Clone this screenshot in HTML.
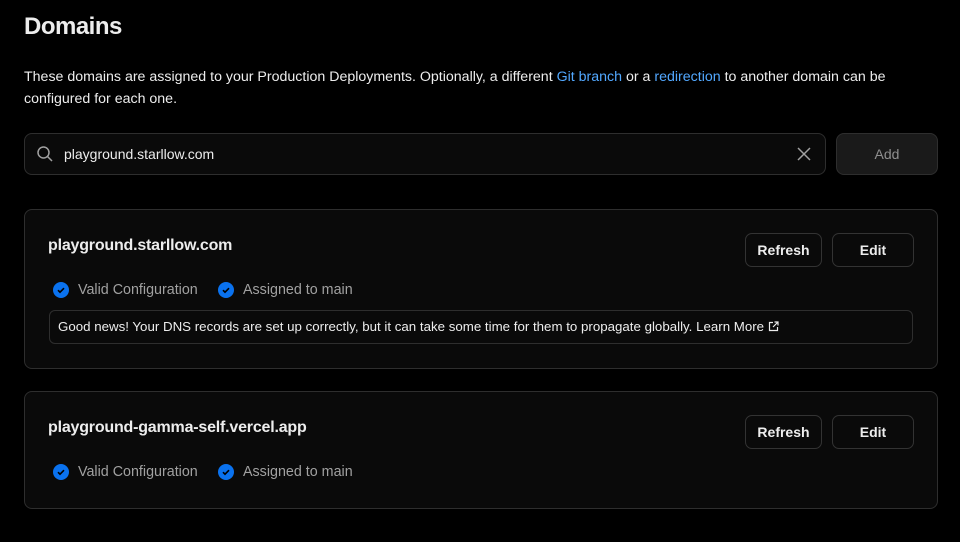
<!DOCTYPE html>
<html><head><style>
*{box-sizing:border-box;margin:0;padding:0}
body{width:960px;height:542px;background:#000;color:#ededed;font-family:"Liberation Sans",sans-serif;position:relative;overflow:hidden}
.abs{position:absolute}
h1{position:absolute;left:24px;top:13px;font-size:24px;font-weight:bold;letter-spacing:-0.5px;color:#ededed}
.desc{left:24px;top:66px;font-size:14.2px;line-height:22px;color:#ededed;width:880px}
.desc a{color:#52a8ff;text-decoration:none}
.search{left:24px;top:133px;width:802px;height:42px;border:1px solid #2e2e2e;border-radius:8px;background:#0a0a0a}
.add{left:836px;top:133px;width:102px;height:42px;border:1px solid #2e2e2e;border-radius:8px;background:#1a1a1a;color:#8f8f8f;font-size:14px;text-align:center;line-height:40px}
.card{left:24px;width:914px;border:1px solid #2e2e2e;border-radius:8px;background:#0a0a0a}
.name{font-size:16px;font-weight:bold;color:#ededed;letter-spacing:-0.2px}
.btn{height:34px;border:1px solid #333;border-radius:7px;background:#0a0a0a;font-size:14px;font-weight:bold;text-align:center;line-height:32px;color:#ededed}
.st{font-size:14.3px;color:#a1a1a1;display:flex;align-items:center}
.chk{width:16px;height:16px;border-radius:50%;background:#0a72ef;display:inline-block;margin-right:9px;position:relative}
.chk svg{position:absolute;left:0;top:0}
.note{border:1px solid #2e2e2e;border-radius:6px;font-size:13.3px;color:#ededed;padding:0 8px;line-height:32px;white-space:nowrap}
</style></head><body>
<h1>Domains</h1>
<div class="abs desc">These domains are assigned to your Production Deployments. Optionally, a different <a>Git branch</a> or a <a>redirection</a> to another domain can be configured for each one.</div>
<div class="abs search">
<svg class="abs" style="left:11px;top:11px" width="18" height="18" viewBox="0 0 18 18" fill="none" stroke="#a1a1a1" stroke-width="1.5"><circle cx="7.5" cy="7.5" r="5.5"/><path d="M11.5 11.5L16 16"/></svg>
<div class="abs" style="left:39px;top:12px;font-size:14px;color:#ededed">playground.starllow.com</div>
<svg class="abs" style="left:772px;top:13px" width="14" height="14" viewBox="0 0 14 14" stroke="#a1a1a1" stroke-width="1.5"><path d="M1 1L13 13M13 1L1 13"/></svg>
</div>
<div class="abs add">Add</div>

<div class="abs card" style="top:209px;height:160px">
<div class="abs name" style="left:23px;top:27px">playground.starllow.com</div>
<div class="abs btn" style="left:720px;top:23px;width:77px">Refresh</div>
<div class="abs btn" style="left:807px;top:23px;width:82px">Edit</div>
<div class="abs st" style="left:28px;top:72px"><span class="chk"><svg width="16" height="16" viewBox="0 0 16 16" fill="none" stroke="#000" stroke-width="1.6"><path d="M5 8.2l2 2 4-4"/></svg></span>Valid Configuration</div>
<div class="abs st" style="left:193px;top:72px"><span class="chk"><svg width="16" height="16" viewBox="0 0 16 16" fill="none" stroke="#000" stroke-width="1.6"><path d="M5 8.2l2 2 4-4"/></svg></span>Assigned to main</div>
<div class="abs note" style="left:24px;top:100px;width:864px;height:34px">Good news! Your DNS records are set up correctly, but it can take some time for them to propagate globally. <b style="color:#ededed;font-weight:normal">Learn More</b> <svg width="11" height="11" viewBox="0 0 11 11" fill="none" stroke="#ededed" stroke-width="1.2" style="vertical-align:-1px"><path d="M5 1.5H1.5v8h8V6M6.5 1h3.5v3.5M10 1L5 6"/></svg></div>
</div>

<div class="abs card" style="top:391px;height:118px">
<div class="abs name" style="left:23px;top:27px">playground-gamma-self.vercel.app</div>
<div class="abs btn" style="left:720px;top:23px;width:77px">Refresh</div>
<div class="abs btn" style="left:807px;top:23px;width:82px">Edit</div>
<div class="abs st" style="left:28px;top:72px"><span class="chk"><svg width="16" height="16" viewBox="0 0 16 16" fill="none" stroke="#000" stroke-width="1.6"><path d="M5 8.2l2 2 4-4"/></svg></span>Valid Configuration</div>
<div class="abs st" style="left:193px;top:72px"><span class="chk"><svg width="16" height="16" viewBox="0 0 16 16" fill="none" stroke="#000" stroke-width="1.6"><path d="M5 8.2l2 2 4-4"/></svg></span>Assigned to main</div>
</div>
</body></html>
